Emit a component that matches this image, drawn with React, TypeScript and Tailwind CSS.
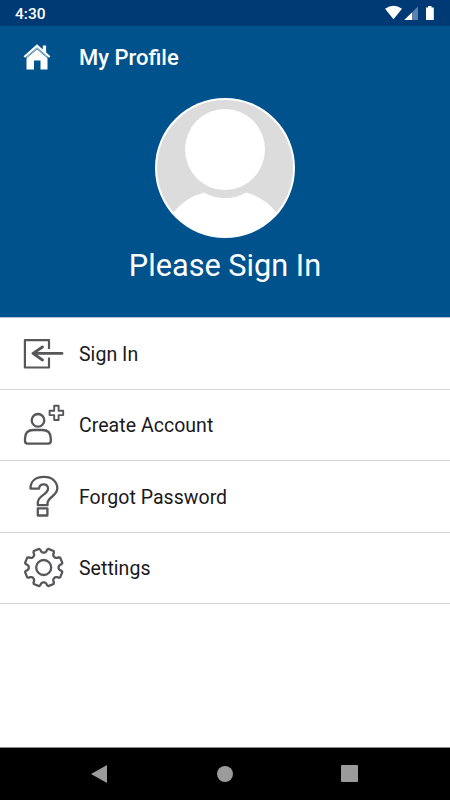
import type { ReactNode } from "react"

interface MenuItem {
  label: string
  icon: ReactNode
  height: string
}

function HomeIcon() {
  return (
    <svg className="h-7 w-8 shrink-0" viewBox="0 0 32 28" fill="none">
      <path d="M4.500 14 15 5l10.500 9V26.500h-7V17.500h-6.500V26.500H4.500z" fill="#fff" />
      <path d="M20.800 2.500h3.300v7.500l-3.300-3z" fill="#fff" />
      <path d="M4 15.300 15 6l11 9.300" stroke="#00528c" strokeWidth="0.7" />
      <path d="M2.300 14 15 2.800 27.700 14" stroke="#fff" strokeWidth="2.200" />
    </svg>
  )
}

function StatusIcons() {
  return (
    <svg className="h-[26px] w-[50px]" viewBox="0 0 50 26">
      <path d="M0 8.800Q8.500 2.600 17 8.800L8.500 19.200z" fill="#fff" />
      <path d="M33 6.500v13.500H19.300z" fill="#5c81ab" />
      <path d="M27 12.400v7.600H19.300z" fill="#fff" />
      <path d="M41 7.500h2V6h3.500v1.500h2.300v12.500H41z" fill="#fff" />
    </svg>
  )
}

function Avatar() {
  return (
    <svg className="size-[140px]" viewBox="0 0 140 140">
      <defs>
        <clipPath id="avatar-clip">
          <circle cx="70" cy="70" r="69" />
        </clipPath>
      </defs>
      <circle cx="70" cy="70" r="70" fill="#fff" />
      <circle cx="70" cy="70" r="68" fill="#dcdcdc" />
      <g clipPath="url(#avatar-clip)" fill="#fff">
        <path d="M18 115Q30 99.500 49 94.500Q58 100 70 100T91 94.500Q110 99.500 122 115V140H18z" />
        <ellipse cx="70" cy="51.500" rx="40" ry="40.500" />
      </g>
    </svg>
  )
}

function MenuIcon({ children }: { children: ReactNode }) {
  return (
    <svg
      className="mt-[13px] h-[45px] w-11 shrink-0 self-start"
      viewBox="0 0 44 45"
      fill="none"
      stroke="#57575a"
      strokeWidth="2.300"
      strokeLinejoin="round"
    >
      {children}
    </svg>
  )
}

const GEAR_TEETH = 8

// closed outline of the cog, one flat-topped tooth per step
function gearPath(cx: number, cy: number, outer: number, inner: number) {
  const step = (Math.PI * 2) / GEAR_TEETH
  const points: string[] = []
  for (let i = 0; i < GEAR_TEETH; i++) {
    const mid = -Math.PI / 2 + step * (i + 0.5)
    const corners = [
      [-0.42, inner],
      [-0.34, inner + 0.6],
      [-0.29, inner + 1.6],
      [-0.26, outer - 1],
      [-0.19, outer],
      [0.19, outer],
      [0.26, outer - 1],
      [0.29, inner + 1.6],
      [0.34, inner + 0.6],
      [0.42, inner],
    ]
    corners.forEach(([offset, r]) => {
      const a = mid + offset * step
      points.push(`${(cx + r * Math.cos(a)).toFixed(2)} ${(cy + r * Math.sin(a)).toFixed(2)}`)
    })
  }
  return `M${points.join("L")}Z`
}

const menuItems: MenuItem[] = [
  {
    label: "Sign In",
    height: "h-[72px]",
    icon: (
      <MenuIcon>
        <path d="M27 18V9.200H2.900V36.500H27V26.500" strokeWidth="2.200" />
        <path d="M40 22.400H11M20.500 16L11 22.400L20.500 29" strokeWidth="2.900" strokeLinecap="round" />
      </MenuIcon>
    ),
  },
  {
    label: "Create Account",
    height: "h-[71px]",
    icon: (
      <MenuIcon>
        <circle cx="16" cy="17.300" r="6.300" />
        <path d="M3 38V35.500Q3 27 11.500 27H20.300Q28.800 27 28.800 35.500V38Q28.800 40.600 26.200 40.600H5.600Q3 40.600 3 38Z" />
        <path
          d="M32.200 2.700H36.600V7.700H41.200V12.100H36.600V17H32.200V12.100H27.600V7.700H32.200Z"
          strokeWidth="1.900"
        />
      </MenuIcon>
    ),
  },
  {
    label: "Forgot Password",
    height: "h-[72px]",
    icon: (
      <MenuIcon>
        <path d="M8.500 14.600C8.500 7 14 2.900 22 2.900C30 2.900 35.300 7.500 35.300 14.300C35.300 22 26 23 25.500 29V31.200H15.800V28.500C15.800 21.500 26 20.500 26 14.800C26 12 24.500 10.300 21.800 10.300C18.800 10.300 17.300 12 17 14.600Z" />
        <path d="M15.800 34.400H25.400V41.500H15.800Z" />
      </MenuIcon>
    ),
  },
  {
    label: "Settings",
    height: "h-[71px]",
    icon: (
      <MenuIcon>
        <path d={gearPath(21.7, 21.5, 19.2, 15)} />
        <circle cx="21.700" cy="21.500" r="7.500" />
      </MenuIcon>
    ),
  },
]

export default function App() {
  return (
    <div className="flex h-[800px] w-[450px] flex-col overflow-hidden bg-white font-['Roboto',sans-serif]">
      <div className="flex h-[26px] items-center justify-between bg-[#003a75] pr-[15px] pl-[15px] text-white">
        <span className="pt-[3px] text-[15.5px] leading-none font-medium">4:30</span>
        <StatusIcons />
      </div>

      <header className="flex h-[291px] flex-col bg-[#00528c] text-white">
        <div className="flex h-[62px] items-center pl-[22px]">
          <HomeIcon />
          <h1 className="pt-[2px] pl-[25px] text-[22px] leading-none font-medium">My Profile</h1>
        </div>
        <div className="flex flex-col items-center pt-[10px]">
          <Avatar />
          <p className="pt-2.5 text-[30.7px] leading-9">Please Sign In</p>
        </div>
      </header>

      <main className="flex-1 border-t border-[#b9bfd6]">
        {menuItems.map((item) => (
          <button
            key={item.label}
            className={`flex w-full items-center border-b border-[#d6d6d6] pl-[22px] text-left ${item.height}`}
          >
            {item.icon}
            <span className="pt-[2px] pl-[13px] text-[19.5px] leading-none tracking-[0.04px] text-[#1a1a1a]">
              {item.label}
            </span>
          </button>
        ))}
      </main>

      <nav className="flex h-[53px] items-center justify-between border-t border-[#8a8a8a] bg-black pr-[92px] pb-px pl-[91px]">
        <svg className="h-[18px] w-4" viewBox="0 0 16 18">
          <path d="M0 9 16 0v18z" fill="#9b9b9b" />
        </svg>
        <div className="size-4 translate-x-px rounded-full bg-[#9b9b9b]" />
        <div className="size-[17px] rounded-[1px] bg-[#9b9b9b]" />
      </nav>
    </div>
  )
}
